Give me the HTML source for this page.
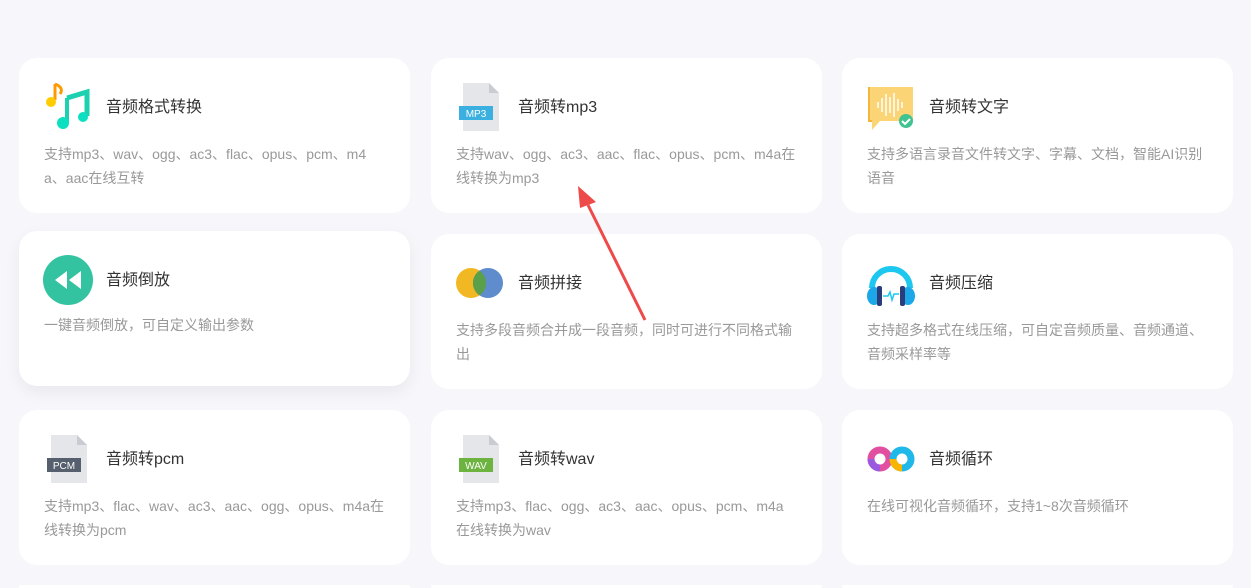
<!DOCTYPE html>
<html><head><meta charset="utf-8"><style>
html,body{margin:0;width:1251px;height:588px;overflow:hidden}
body{background:#f6f6fb;position:relative;font-family:"Liberation Sans","Noto Sans CJK SC",sans-serif}
.c{position:absolute;width:391px;height:155px;background:#fff;border-radius:18px}
.ic{position:absolute;left:24px;top:24px;width:50px;height:50px}
.t{position:absolute;left:87px;top:35px;font-size:16px;color:#333}
.d{position:absolute;left:25px;top:84px;width:340px;font-size:14px;line-height:24px;color:#999;word-break:break-all}
</style></head><body>
<div class="c" style="left:19px;top:58px"><svg class="ic" viewBox="0 0 50 50"><path d="M12 2v16" stroke="#f90" stroke-width="3"/><path d="M12 2c6 2 8 6 5 10" stroke="#f90" stroke-width="3" fill="none"/><circle cx="8" cy="20" r="5" fill="#fc0"/><path d="M24 16l20-6v24" stroke="#1cd0b0" stroke-width="5" fill="none"/><path d="M24 16v24" stroke="#1cd0b0" stroke-width="4"/><circle cx="20" cy="41" r="6" fill="#0de0c0"/><circle cx="40" cy="35" r="5" fill="#0de0c0"/></svg><div class="t">音频格式转换</div><div class="d">支持mp3、wav、ogg、ac3、flac、opus、pcm、m4a、aac在线互转</div></div>
<div class="c" style="left:431px;top:58px"><svg class="ic" viewBox="0 0 50 50"><path d="M8 1h26l10 10v38H8z" fill="#e4e6ea"/><path d="M34 1v10h10z" fill="#c8cbd1"/><rect x="4" y="24" width="34" height="14" fill="#3ab0e0"/><text x="21" y="35" font-size="10" fill="#fff" text-anchor="middle" font-family="Liberation Sans">MP3</text></svg><div class="t">音频转mp3</div><div class="d">支持wav、ogg、ac3、aac、flac、opus、pcm、m4a在线转换为mp3</div></div>
<div class="c" style="left:842px;top:58px"><svg class="ic" viewBox="0 0 50 50"><path d="M3 5h44v34H14l-8 9V39H3z" fill="#fbd476"/><path d="M3 5v34h3" stroke="#f5b53a" stroke-width="2" fill="none"/><g stroke="#fff" stroke-width="1.5"><path d="M12 20v6M16 16v14M20 12v22M24 15v16M28 11v24M32 17v12M36 20v6"/></g><circle cx="40" cy="39" r="7" fill="#3fc390"/><path d="M36 39l3 3 5-5" stroke="#fff" stroke-width="2" fill="none"/></svg><div class="t">音频转文字</div><div class="d">支持多语言录音文件转文字、字幕、文档，智能AI识别语音</div></div>

<div class="c" style="left:19px;top:231px;box-shadow:0 6px 16px rgba(0,0,0,.06)"><svg class="ic" viewBox="0 0 50 50"><circle cx="25" cy="25" r="25" fill="#33c3a0"/><path d="M24 16v18l-12-9zM38 16v18l-12-9z" fill="#fff"/></svg><div class="t">音频倒放</div><div class="d" style="top:82px">一键音频倒放，可自定义输出参数</div></div>
<div class="c" style="left:431px;top:234px"><svg class="ic" viewBox="0 0 50 50"><circle cx="16" cy="25" r="15" fill="#f2b824"/><circle cx="33" cy="25" r="15" fill="#4d80c6" opacity=".9"/><path d="M24.5 12.6a15 15 0 0 1 0 24.8a15 15 0 0 1 0-24.8z" fill="#5aa04a"/></svg><div class="t">音频拼接</div><div class="d">支持多段音频合并成一段音频，同时可进行不同格式输出</div></div>
<div class="c" style="left:842px;top:234px"><svg class="ic" viewBox="0 0 50 50"><path d="M6 30a19 19 0 0 1 38 0" stroke="#1cc8f0" stroke-width="6" fill="none"/><path d="M8 30v10" stroke="#a6d8f2" stroke-width="3"/><path d="M42 30v10" stroke="#a6d8f2" stroke-width="3"/><ellipse cx="8" cy="38" rx="7" ry="9" fill="#1ca8e8"/><ellipse cx="42" cy="38" rx="7" ry="9" fill="#1ca8e8"/><rect x="11" y="28" width="5" height="20" rx="2" fill="#2a3d7a"/><rect x="34" y="28" width="5" height="20" rx="2" fill="#2a3d7a"/><path d="M17 38h5l2-4 2 8 2-6h5" stroke="#1cc8f0" stroke-width="1.5" fill="none"/></svg><div class="t">音频压缩</div><div class="d">支持超多格式在线压缩，可自定音频质量、音频通道、音频采样率等</div></div>

<div class="c" style="left:19px;top:410px"><svg class="ic" viewBox="0 0 50 50"><path d="M8 1h26l10 10v38H8z" fill="#e4e6ea"/><path d="M34 1v10h10z" fill="#c8cbd1"/><rect x="4" y="24" width="34" height="14" fill="#555f6d"/><text x="21" y="35" font-size="10" fill="#fff" text-anchor="middle" font-family="Liberation Sans">PCM</text></svg><div class="t">音频转pcm</div><div class="d">支持mp3、flac、wav、ac3、aac、ogg、opus、m4a在线转换为pcm</div></div>
<div class="c" style="left:431px;top:410px"><svg class="ic" viewBox="0 0 50 50"><path d="M8 1h26l10 10v38H8z" fill="#e4e6ea"/><path d="M34 1v10h10z" fill="#c8cbd1"/><rect x="4" y="24" width="34" height="14" fill="#6cb33f"/><text x="21" y="35" font-size="10" fill="#fff" text-anchor="middle" font-family="Liberation Sans">WAV</text></svg><div class="t">音频转wav</div><div class="d">支持mp3、flac、ogg、ac3、aac、opus、pcm、m4a在线转换为wav</div></div>
<div class="c" style="left:842px;top:410px"><svg class="ic" viewBox="0 0 50 50"><circle cx="14" cy="25" r="9" stroke="#e24fa0" stroke-width="7" fill="none"/><circle cx="36" cy="25" r="9" stroke="#20b8e8" stroke-width="7" fill="none"/><path d="M36 34a9 9 0 0 1-9-9" stroke="#f7b500" stroke-width="7" fill="none"/><path d="M5 25a9 9 0 0 0 9 9" stroke="#9b59e0" stroke-width="7" fill="none"/></svg><div class="t">音频循环</div><div class="d">在线可视化音频循环，支持1~8次音频循环</div></div>

<div class="c" style="left:19px;top:585px;height:3px"></div><div class="c" style="left:431px;top:585px;height:3px"></div><div class="c" style="left:842px;top:585px;height:3px"></div>
<svg style="position:absolute;left:0;top:0" width="1251" height="588"><path d="M645 320L588 205" stroke="#ee4a4a" stroke-width="3"/><path d="M578 186l18 16-16 6z" fill="#ee4a4a"/></svg>
</body></html>
